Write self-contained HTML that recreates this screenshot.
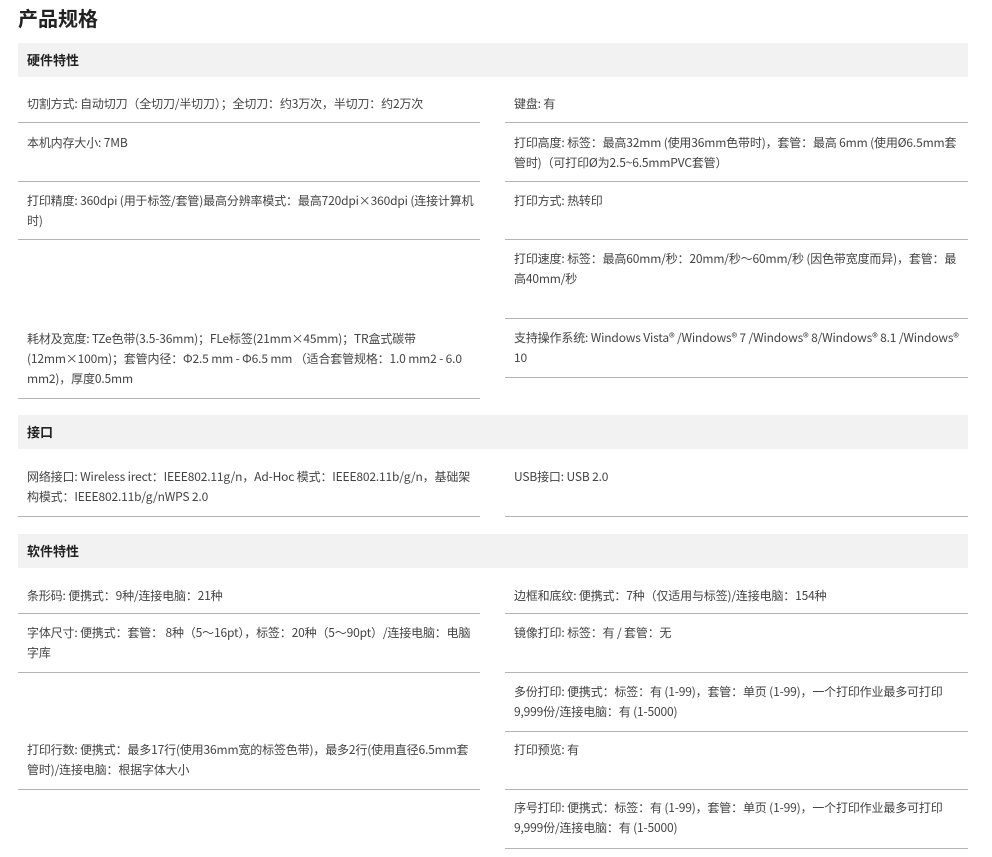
<!DOCTYPE html>
<html><head><meta charset="utf-8"><style>
*{margin:0;padding:0;box-sizing:border-box}
body{width:992px;height:857px;background:#fff;position:relative;overflow:hidden;font-family:"Noto Sans CJK SC","Liberation Sans",sans-serif;color:#444}
.t{position:absolute;font-size:12px;line-height:20px;white-space:nowrap;letter-spacing:-0.16px}
.l{position:absolute;height:1px;background:#b4b4b4}
.L{left:18px;width:462px}.R{left:505px;width:463px}
.h{position:absolute;left:18px;width:950px;height:34px;background:#f2f2f2;font-size:13px;font-weight:bold;color:#222;padding-left:9px;line-height:34px}
h1{position:absolute;left:18px;top:4px;font-size:20px;font-weight:bold;color:#222;line-height:28px}
.a{left:27px}.b{left:514px}
</style></head><body>
<h1>产品规格</h1>
<div class="h" style="top:43px">硬件特性</div>
<div class="t a" style="top:94px">切割方式: 自动切刀（全切刀/半切刀）；全切刀：约3万次，半切刀：约2万次</div>
<div class="t a" style="top:133px">本机内存大小: 7MB</div>
<div class="t a" style="top:191px">打印精度: 360dpi (用于标签/套管)最高分辨率模式：最高720dpi×360dpi (连接计算机<br>时)</div>
<div class="t a" style="top:329px">耗材及宽度: TZe色带(3.5-36mm)；FLe标签(21mm×45mm)；TR盒式碳带<br>(12mm×100m)；套管内径：Φ2.5 mm - Φ6.5 mm （适合套管规格：1.0 mm2 - 6.0<br>mm2)，厚度0.5mm</div>
<div class="l L" style="top:122px"></div><div class="l L" style="top:181px"></div><div class="l L" style="top:239px"></div><div class="l L" style="top:398px"></div>
<div class="t b" style="top:94px">键盘: 有</div>
<div class="t b" style="top:133px">打印高度: 标签：最高32mm (使用36mm色带时)，套管：最高 6mm (使用Ø6.5mm套<br>管时)（可打印Ø为2.5~6.5mmPVC套管）</div>
<div class="t b" style="top:191px">打印方式: 热转印</div>
<div class="t b" style="top:249px">打印速度: 标签：最高60mm/秒：20mm/秒〜60mm/秒 (因色带宽度而异)，套管：最<br>高40mm/秒</div>
<div class="t b" style="top:328px">支持操作系统: Windows Vista® /Windows® 7 /Windows® 8/Windows® 8.1 /Windows®<br>10</div>
<div class="l R" style="top:122px"></div><div class="l R" style="top:181px"></div><div class="l R" style="top:239px"></div><div class="l R" style="top:318px"></div><div class="l R" style="top:377px"></div>
<div class="h" style="top:415px">接口</div>
<div class="t a" style="top:467px">网络接口: Wireless irect：IEEE802.11g/n，Ad-Hoc 模式：IEEE802.11b/g/n，基础架<br>构模式：IEEE802.11b/g/nWPS 2.0</div>
<div class="t b" style="top:467px">USB接口: USB 2.0</div>
<div class="l L" style="top:516px"></div><div class="l R" style="top:516px"></div>
<div class="h" style="top:534px">软件特性</div>
<div class="t a" style="top:586px">条形码: 便携式：9种/连接电脑：21种</div>
<div class="t a" style="top:623px">字体尺寸: 便携式：套管： 8种（5～16pt），标签：20种（5～90pt）/连接电脑：电脑<br>字库</div>
<div class="t a" style="top:740px">打印行数: 便携式：最多17行(使用36mm宽的标签色带)，最多2行(使用直径6.5mm套<br>管时)/连接电脑：根据字体大小</div>
<div class="l L" style="top:613px"></div><div class="l L" style="top:672px"></div><div class="l L" style="top:789px"></div>
<div class="t b" style="top:586px">边框和底纹: 便携式：7种（仅适用与标签)/连接电脑：154种</div>
<div class="t b" style="top:623px">镜像打印: 标签：有 / 套管：无</div>
<div class="t b" style="top:682px">多份打印: 便携式：标签：有 (1-99)，套管：单页 (1-99)，一个打印作业最多可打印<br>9,999份/连接电脑：有 (1-5000)</div>
<div class="t b" style="top:740px">打印预览: 有</div>
<div class="t b" style="top:798px">序号打印: 便携式：标签：有 (1-99)，套管：单页 (1-99)，一个打印作业最多可打印<br>9,999份/连接电脑：有 (1-5000)</div>
<div class="l R" style="top:613px"></div><div class="l R" style="top:672px"></div><div class="l R" style="top:731px"></div><div class="l R" style="top:789px"></div><div class="l R" style="top:848px"></div>
</body></html>
